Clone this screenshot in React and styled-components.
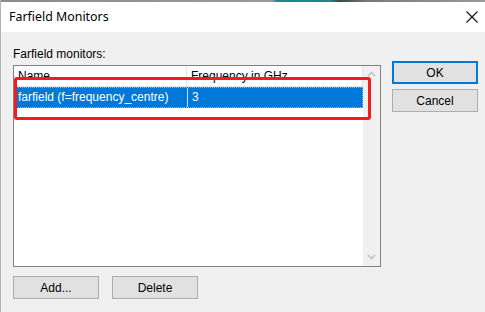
import styled, { createGlobalStyle } from "styled-components";

const GlobalStyle = createGlobalStyle`
    html, body {
        margin: 0;
        padding: 0;
        background: #f0f0f0;
    }
    body {
        font-family: "Liberation Sans", Arial, sans-serif;
        font-size: 12px;
        color: #000;
    }
`;

const monitors = [
    { name: "farfield (f=frequency_centre)", freq: "3" },
];

function App() {
    return (
        <>
            <GlobalStyle />
            <Window>
                <DesktopStrip />
                <TitleBar>
                    <span className="title">Farfield Monitors</span>
                    <svg className="close" width="12" height="12" viewBox="0 0 12 12">
                        <path d="M0.5 0.5 L11.5 11.5 M11.5 0.5 L0.5 11.5" stroke="#111" strokeWidth="1.1" fill="none" />
                    </svg>
                </TitleBar>
                <Body>
                    <LeftPane>
                        <Label>Farfield monitors:</Label>
                        <ListBox>
                            <ListArea>
                                <HeaderRow>
                                    <HeaderCell $width={173}>Name</HeaderCell>
                                    <HeaderCell $width={176}>Frequency in GHz</HeaderCell>
                                </HeaderRow>
                                {monitors.map((m, i) => (
                                    <Row key={i} $selected>
                                        <Cell $width={171}>{m.name}</Cell>
                                        <Cell $width={175} $divider>{m.freq}</Cell>
                                    </Row>
                                ))}
                            </ListArea>
                            <ScrollBar>
                                <svg width="9" height="6" viewBox="0 0 9 6">
                                    <path d="M1 5 L4.5 1.5 L8 5" stroke="#c2c2c2" strokeWidth="1.6" fill="none" />
                                </svg>
                                <svg width="9" height="6" viewBox="0 0 9 6">
                                    <path d="M1 1 L4.5 4.5 L8 1" stroke="#c2c2c2" strokeWidth="1.6" fill="none" />
                                </svg>
                            </ScrollBar>
                            <Annotation />
                        </ListBox>
                        <ButtonRow>
                            <Button>Add...</Button>
                            <Button>Delete</Button>
                        </ButtonRow>
                    </LeftPane>
                    <RightPane>
                        <Button $primary>OK</Button>
                        <Button>Cancel</Button>
                    </RightPane>
                </Body>
            </Window>
        </>
    );
}

export default App;

const Window = styled.div`
    width: 485px;
    height: 312px;
    display: flex;
    flex-direction: column;
    overflow: hidden;
    border-left: 1px solid #b4b4b4;
    box-sizing: border-box;
`;

const DesktopStrip = styled.div`
    height: 2px;
    background: linear-gradient(90deg, #8a8a8a 0%, #9a9a9a 56%, #1b8a84 57%, #1b8a84 68%, #3a4a48 70%, #7a7a7a 76%, #9a9a9a 100%);
`;

const TitleBar = styled.div`
    height: 30px;
    background: #fff;
    display: flex;
    align-items: center;
    justify-content: space-between;
    padding: 0 7px 0 8px;

    .title {
        font-family: "Noto Sans", "Liberation Sans", sans-serif;
        font-size: 12.4px;
        color: #000;
        padding-bottom: 2px;
    }

    .close {
        margin-bottom: 1px;
    }
`;

const Body = styled.div`
    flex: 1;
    display: flex;
    background: #f0f0f0;
    padding: 10px 0 0 12px;
`;

const LeftPane = styled.div`
    display: flex;
    flex-direction: column;
    width: 368px;
`;

const Label = styled.div`
    height: 23px;
    line-height: 24px;
    font-size: 12px;
`;

const ListBox = styled.div`
    position: relative;
    height: 202px;
    box-sizing: border-box;
    border: 1px solid #828282;
    background: #fff;
    display: flex;
`;

const ListArea = styled.div`
    flex: 1;
    display: flex;
    flex-direction: column;
`;

const HeaderRow = styled.div`
    height: 20px;
    display: flex;
    border-bottom: 1px solid #e5e5e5;
`;

const HeaderCell = styled.div`
    width: ${(p) => p.$width}px;
    box-sizing: border-box;
    padding-left: 4px;
    line-height: 20px;
    border-right: 1px solid #e5e5e5;
    color: #000;
`;

const Row = styled.div`
    margin: 0 0 0 1px;
    height: 21px;
    box-sizing: border-box;
    display: flex;
    background: ${(p) => (p.$selected ? "#0078d7" : "transparent")};
    color: ${(p) => (p.$selected ? "#fff" : "#000")};
    border: 1px dotted ${(p) => (p.$selected ? "#e8a060" : "transparent")};
`;

const Cell = styled.div`
    width: ${(p) => p.$width}px;
    box-sizing: border-box;
    line-height: 19px;
    border-left: ${(p) => (p.$divider ? "1px solid #cfe4f7" : "none")};
    padding-left: ${(p) => (p.$divider ? "4px" : "2px")};
`;

const ScrollBar = styled.div`
    width: 17px;
    background: #f0f0f0;
    display: flex;
    flex-direction: column;
    align-items: center;
    justify-content: space-between;
    padding: 5px 0 6px;
`;

const Annotation = styled.div`
    position: absolute;
    left: 0px;
    top: 11px;
    width: 357px;
    height: 43px;
    box-sizing: border-box;
    border: 3px solid #f41c1c;
    border-radius: 3px;
    pointer-events: none;
`;

const ButtonRow = styled.div`
    display: flex;
    gap: 13px;
    padding-top: 9px;
`;

const Button = styled.button`
    width: 86px;
    height: 23px;
    box-sizing: border-box;
    font-family: "Liberation Sans", Arial, sans-serif;
    font-size: 12px;
    color: #000;
    background: #e1e1e1;
    border: ${(p) => (p.$primary ? "2px solid #0078d7" : "1px solid #adadad")};
    padding: 0;
    cursor: pointer;
`;

const RightPane = styled.div`
    display: flex;
    flex-direction: column;
    gap: 5px;
    padding: 19px 0 0 11px;
`;
